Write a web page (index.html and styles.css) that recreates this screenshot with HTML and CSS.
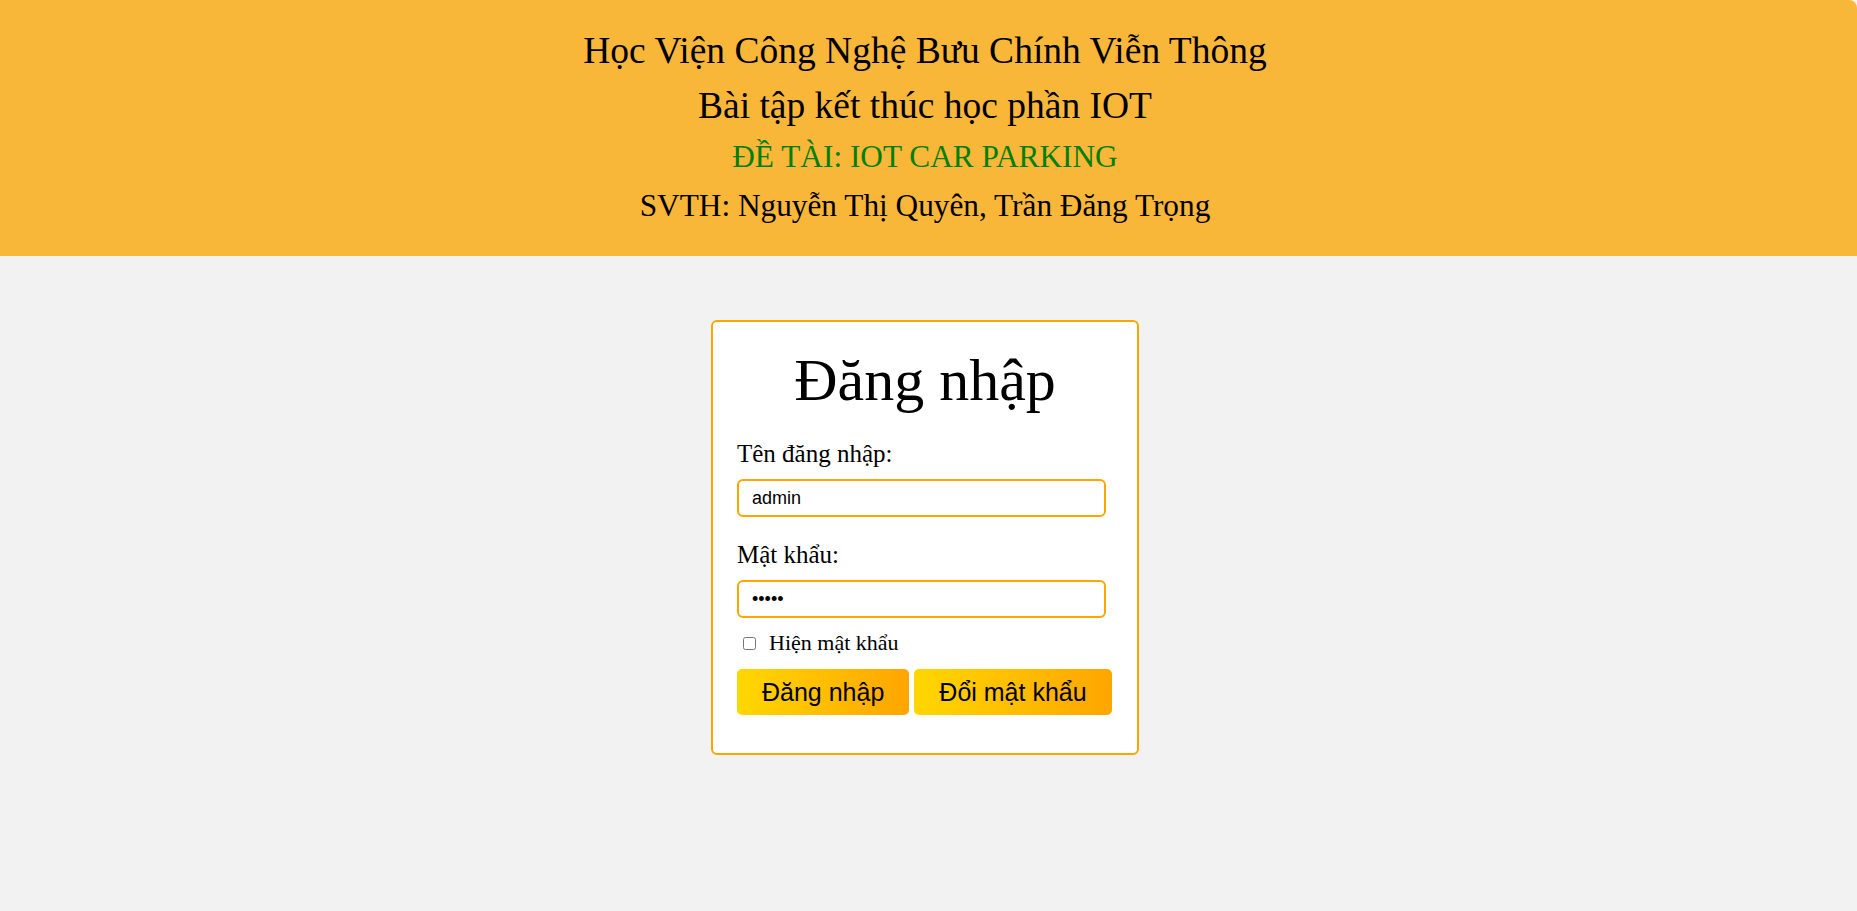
FILE: index.html
```html
<!DOCTYPE html>
<html lang="vi">
<head>
<meta charset="utf-8">
<title>IOT Car Parking - Đăng nhập</title>
<link rel="stylesheet" href="styles.css">
</head>
<body>
<header class="site-header">
  <div class="header-inner">
    <p class="line line-big line-1">Học Viện Công Nghệ Bưu Chính Viễn Thông</p>
    <p class="line line-big line-2">Bài tập kết thúc học phần IOT</p>
    <p class="line line-small line-3 topic">ĐỀ TÀI: IOT CAR PARKING</p>
    <p class="line line-small line-4">SVTH: Nguyễn Thị Quyên, Trần Đăng Trọng</p>
  </div>
</header>
<main class="main">
  <form class="login-card" onsubmit="return false;">
    <h1 class="login-title">Đăng nhập</h1>
    <label class="field-label" for="username">Tên đăng nhập:</label>
    <input class="field-input" id="username" type="text" value="admin">
    <label class="field-label field-label-2" for="password">Mật khẩu:</label>
    <input class="field-input" id="password" type="password" value="12345">
    <div class="show-row">
      <input class="show-check" id="show" type="checkbox">
      <label class="show-label" for="show">Hiện mật khẩu</label>
    </div>
    <div class="btn-row">
      <button class="btn" type="submit">Đăng nhập</button>
      <button class="btn" type="button">Đổi mật khẩu</button>
    </div>
  </form>
</main>
</body>
</html>
```
FILE: styles.css
```css
* {
  box-sizing: border-box;
}

html, body {
  margin: 0;
  padding: 0;
}

body {
  background: #f2f2f2;
  font-family: "Liberation Serif", "Times New Roman", serif;
  color: #000;
  min-height: 911px;
}

.site-header {
  background: #f9b73a;
  height: 256px;
  border-top-right-radius: 8px;
}

.header-inner {
  padding: 23px 7px 0 0;
  text-align: center;
}

.line {
  margin: 0;
}

.line-big {
  font-size: 37.5px;
  line-height: 55px;
}

.line-3 {
  font-size: 31.3px;
  line-height: 48px;
}

.line-4 {
  font-size: 31.3px;
  line-height: 50px;
}

.topic {
  color: #008000;
}

.main {
  display: flex;
  justify-content: center;
  padding: 64px 7px 0 0;
}

.login-card {
  width: 428px;
  background: #fff;
  border: 2px solid #ffa500;
  border-radius: 6px;
  padding: 24px 24px 38px 24px;
  display: flex;
  flex-direction: column;
  align-items: flex-start;
}

.login-title {
  align-self: stretch;
  text-align: center;
  font-weight: normal;
  font-size: 60px;
  line-height: 60px;
  margin: 4px 0 29px 0;
}

.field-label {
  font-size: 25px;
  line-height: 29px;
  margin-bottom: 11px;
}

.field-label-2 {
  margin-top: 23px;
}

.field-input {
  width: 369px;
  height: 38px;
  border: 2px solid #ffa500;
  border-radius: 6px;
  padding: 0 13px;
  font-family: "Liberation Sans", Arial, sans-serif;
  font-size: 18px;
  color: #000;
  background: #fff;
  outline: none;
}

.show-row {
  display: flex;
  align-items: center;
  height: 26px;
  margin-top: 12px;
}

.show-check {
  width: 13px;
  height: 13px;
  margin: 0 13px 0 6px;
}

.show-label {
  font-size: 22px;
  line-height: 26px;
}

.btn-row {
  display: flex;
  gap: 5px;
  margin-top: 13px;
}

.btn {
  height: 46px;
  padding: 0 25px;
  border: none;
  border-radius: 5px;
  background: linear-gradient(to right, #ffd700, #ffa500);
  font-family: "Liberation Sans", Arial, sans-serif;
  font-size: 25px;
  color: #000;
  cursor: pointer;
}
```
